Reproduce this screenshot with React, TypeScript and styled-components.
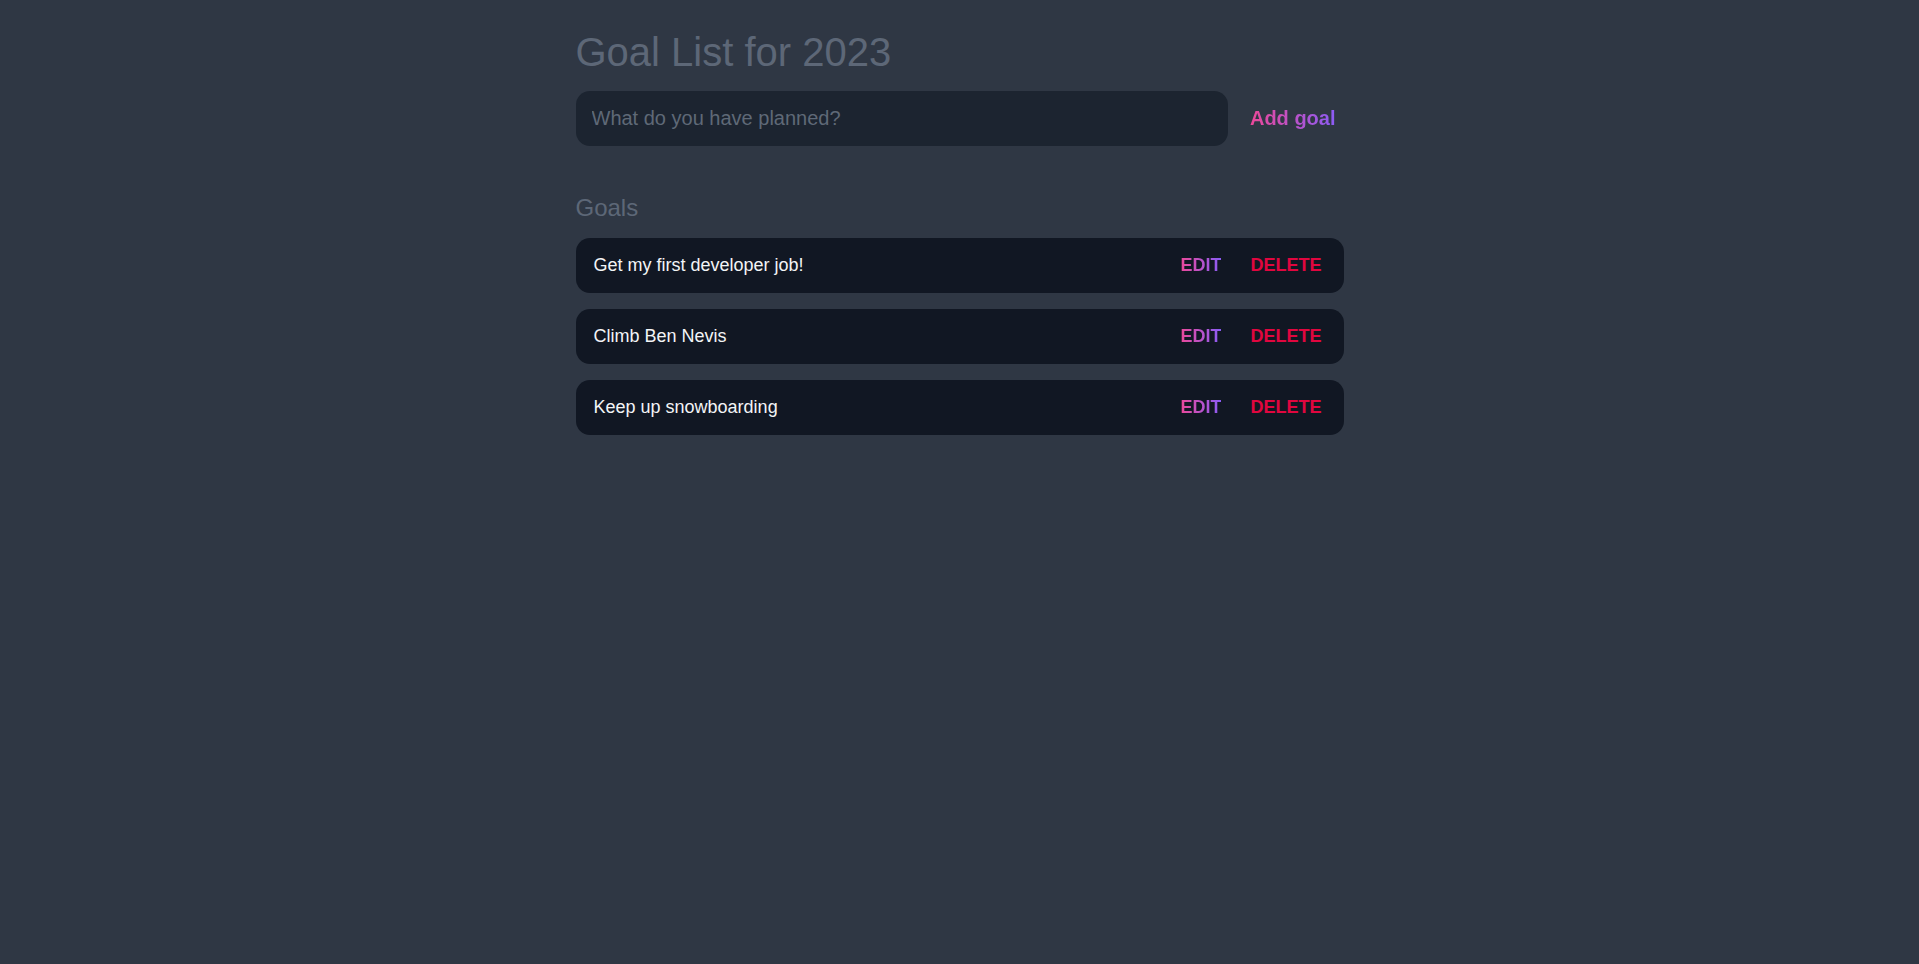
import React, { useState } from "react";
import styled, { createGlobalStyle } from "styled-components";

const GlobalStyle = createGlobalStyle`
  html, body {
    margin: 0;
    padding: 0;
    background: #2f3744;
    min-height: 100%;
  }
  body {
    font-family: "Liberation Sans", Arial, Helvetica, sans-serif;
    min-height: 964px;
  }
  * { box-sizing: border-box; }
`;

const Page = styled.main`
  width: 768px;
  margin: 0 auto;
  padding-top: 28px;
`;

const Title = styled.h1`
  margin: 0;
  font-size: 40px;
  line-height: 48px;
  font-weight: 400;
  color: #5d6777;
`;

const Form = styled.form`
  display: flex;
  align-items: center;
  gap: 14px;
  margin-top: 15px;
`;

const Input = styled.input`
  flex: 1;
  height: 55px;
  border: none;
  outline: none;
  border-radius: 14px;
  background: #1c2430;
  padding: 0 16px;
  font-family: "Liberation Sans", Arial, sans-serif;
  font-size: 20px;
  color: #e5e7eb;
  &::placeholder {
    color: #5f6977;
  }
`;

const GradientButton = styled.button<{ $size: number }>`
  border: none;
  background: linear-gradient(to right, #ec4899, #8b5cf6);
  -webkit-background-clip: text;
  background-clip: text;
  color: transparent;
  font-family: "Liberation Sans", Arial, sans-serif;
  font-weight: 700;
  font-size: ${(p) => p.$size}px;
  padding: 0;
  cursor: pointer;
`;

const AddButton = styled(GradientButton)`
  padding: 0 8px;
  -webkit-background-clip: text;
  background-clip: text;
  background-origin: content-box;
`;

const SectionTitle = styled.h2`
  margin: 46px 0 0;
  font-size: 24px;
  line-height: 32px;
  font-weight: 400;
  color: #5d6777;
`;

const List = styled.ul`
  list-style: none;
  margin: 14px 0 0;
  padding: 0;
  display: flex;
  flex-direction: column;
  gap: 16px;
`;

const Row = styled.li`
  display: flex;
  align-items: center;
  height: 55px;
  padding: 0 22px 0 18px;
  background: #111723;
  border-radius: 14px;
`;

const GoalText = styled.span`
  flex: 1;
  font-size: 18px;
  color: #f3f4f6;
`;

const Actions = styled.div`
  display: flex;
  align-items: center;
  gap: 29px;
`;

const DeleteButton = styled.button`
  border: none;
  background: none;
  padding: 0;
  color: #e1063f;
  font-family: "Liberation Sans", Arial, sans-serif;
  font-weight: 700;
  font-size: 18px;
  cursor: pointer;
`;

const goals = [
  "Get my first developer job!",
  "Climb Ben Nevis",
  "Keep up snowboarding",
];

export default function App() {
  const [value, setValue] = useState("");
  return (
    <>
      <GlobalStyle />
      <Page>
        <Title>Goal List for 2023</Title>
        <Form onSubmit={(e) => e.preventDefault()}>
          <Input
            placeholder="What do you have planned?"
            value={value}
            onChange={(e) => setValue(e.target.value)}
          />
          <AddButton type="submit" $size={20}>
            Add goal
          </AddButton>
        </Form>
        <SectionTitle>Goals</SectionTitle>
        <List>
          {goals.map((g) => (
            <Row key={g}>
              <GoalText>{g}</GoalText>
              <Actions>
                <GradientButton type="button" $size={18}>
                  EDIT
                </GradientButton>
                <DeleteButton type="button">DELETE</DeleteButton>
              </Actions>
            </Row>
          ))}
        </List>
      </Page>
    </>
  );
}
